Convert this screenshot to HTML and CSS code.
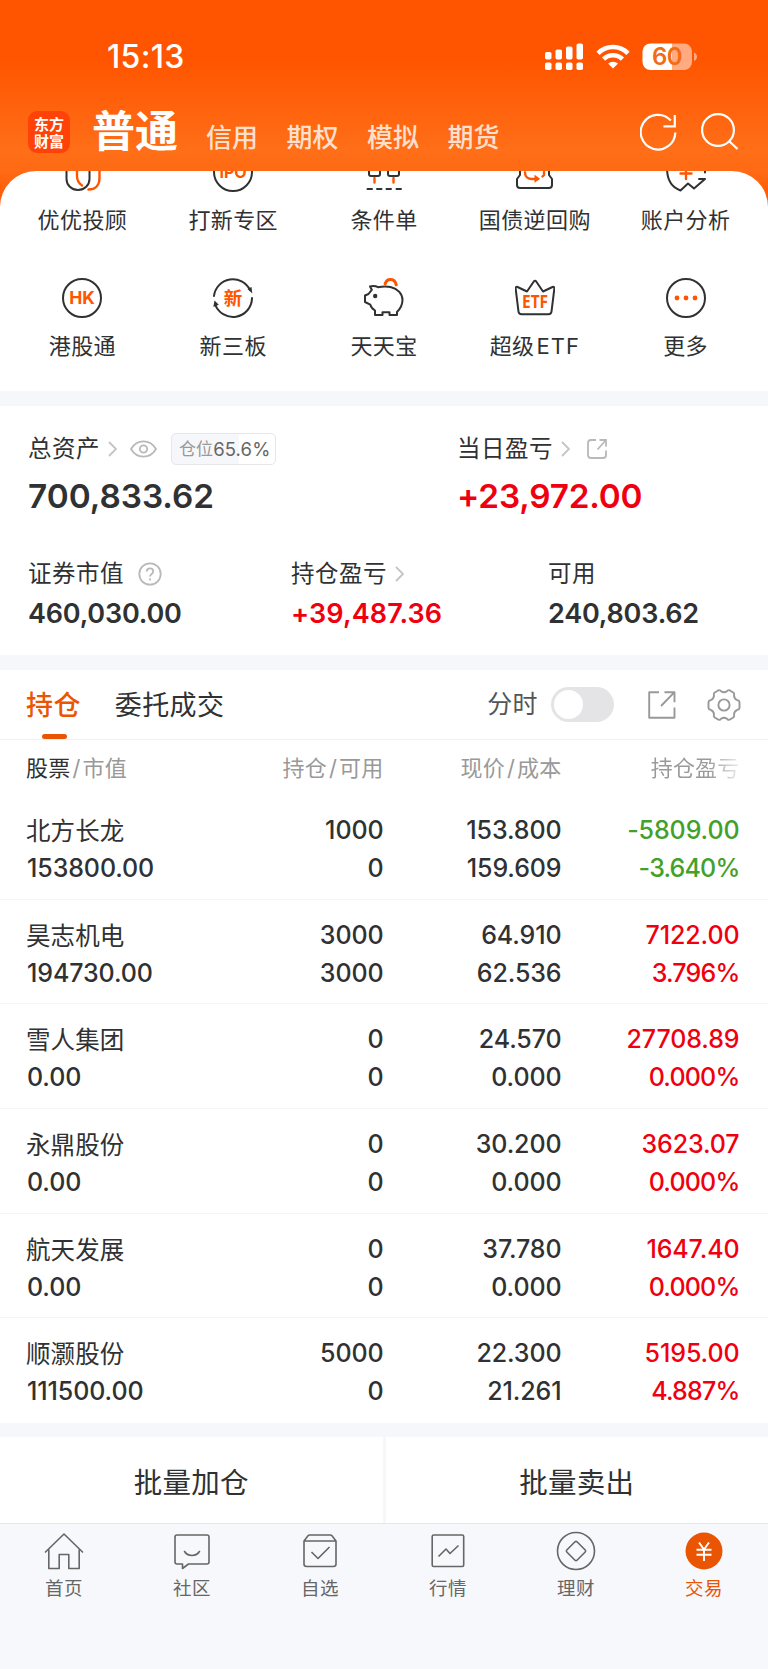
FILE: index.html
```html
<!DOCTYPE html>
<html lang="zh-CN">
<head>
<meta charset="utf-8">
<title>普通交易</title>
<link rel="stylesheet" href="styles.css">
</head>
<body>
<div class="app">
  <header class="top">
    <div class="status">
      <span class="time">15:13</span>
      <svg class="status-icons" width="153" height="28" viewBox="0 0 153 28" fill="#fff">
        <rect x="0" y="9" width="6.5" height="7.5" rx="1.8"/><rect x="10.5" y="6.5" width="6.5" height="10" rx="1.8"/><rect x="21" y="3.5" width="6.5" height="13" rx="1.8"/><rect x="31.5" y="0.5" width="6.5" height="16" rx="1.8"/>
        <rect x="0" y="19.5" width="6.5" height="7.5" rx="1.8"/><rect x="10.5" y="19.5" width="6.5" height="7.5" rx="1.8"/><rect x="21" y="19.5" width="6.5" height="7.5" rx="1.8"/><rect x="31.5" y="19.5" width="6.5" height="7.5" rx="1.8"/>
        <g fill="none" stroke="#fff" stroke-width="4.6"><path d="M53 10.3a21 21 0 0 1 30 0"/><path d="M58.6 16.2a13.2 13.2 0 0 1 18.8 0"/></g>
        <path d="M63 20.6a7.5 7.5 0 0 1 10 0l-5 5z"/>
        <path d="M105.500 .5H127v26.500h-21.500a8 8 0 0 1-8-8v-10.500a8 8 0 0 1 8-8z"/>
        <path d="M127 .5h12a8 8 0 0 1 8 8v10.500a8 8 0 0 1-8 8h-12z" fill-opacity=".5"/>
        <path d="M149 9.500c4 1.500 4 7 0 8.500z" fill-opacity=".5"/>
        <text class="battery" x="122" y="22" text-anchor="middle">60</text>
      </svg>
    </div>
    <div class="nav">
      <div class="logo"><span>东方</span><span>财富</span></div>
      <h1 class="nav-main">普通</h1>
      <nav class="nav-tabs"><span>信用</span><span>期权</span><span>模拟</span><span>期货</span></nav>
      <svg class="nav-icons" width="128" height="40" viewBox="0 0 128 40" fill="none" stroke="#fff" stroke-width="2.200">
        <path d="M35.300 20.500a17.300 17.300 0 1 1-4.500-12M34.800 3v11.300H23.500"/>
        <circle cx="78" cy="18" r="15.900"/><path d="M89.500 29.500l8 7.500"/>
      </svg>
    </div>
  </header>

  <section class="shortcuts">
    <div class="cut">
      <svg width="40" height="40" viewBox="0 0 40 40"><path d="M4.500 12v15c0 6 5 11 11.500 11s11.500-5 11.500-11V12" class="ln"/><path d="M15 12v12c0 4 1.500 7 5 9.500M37.500 12v14c0 7-4 11.500-11 11.500" class="or"/></svg>
      <span>优优投顾</span></div>
    <div class="cut">
      <svg width="40" height="40" viewBox="0 0 40 40"><circle cx="20" cy="20" r="19" class="ln"/><text x="20" y="26" class="ic" text-anchor="middle" font-size="16">IPO</text></svg>
      <span>打新专区</span></div>
    <div class="cut">
      <svg width="40" height="40" viewBox="0 0 40 40"><path d="M5 12v10a2 2 0 0 0 2 2h7a2 2 0 0 0 2-2V12M24 12v10a2 2 0 0 0 2 2h7a2 2 0 0 0 2-2V12M3.500 37h4.500M13 37h4.500M22.500 37h4.500M32.500 37h4.500" class="ln"/><path d="M10.500 26v4.500M29.500 26v4.500" class="or"/></svg>
      <span>条件单</span></div>
    <div class="cut">
      <svg width="40" height="40" viewBox="0 0 40 40"><path d="M5 12v11l-3 4v6a3 3 0 0 0 3 3h29a3 3 0 0 0 3-3v-6l-3-4V12" class="ln"/><path d="M10 20.500c0 4 3 6.500 7 6.500h6M29 20v3l-1.500 1.500" class="or"/><path d="M19.500 22.800l5.500 4-5.500 4z" fill="#ff5400"/></svg>
      <span>国债逆回购</span></div>
    <div class="cut">
      <svg width="40" height="40" viewBox="0 0 40 40"><path d="M1 16c0 12 5 19.500 13.500 22.500l7.500-7 6 5 11-9.500h-6M39 16v4.500" class="ln"/><path d="M20 14v13M14.500 21.500h11" class="or"/></svg>
      <span>账户分析</span></div>
    <div class="cut">
      <svg width="40" height="40" viewBox="0 0 40 40"><circle cx="20" cy="20" r="19" class="ln"/><text x="20" y="26.300" class="ic" text-anchor="middle" font-size="17.500">HK</text></svg>
      <span>港股通</span></div>
    <div class="cut">
      <svg width="40" height="40" viewBox="0 0 40 40"><path d="M1 18a19 19 0 0 1 36-6M39 20a19 19 0 0 1-37 6" class="ln"/><path d="M34.500 11l4-2 .8 6.500zM.3 29l1.200-6.500 4.300 4.200z" fill="#303133"/><text x="20" y="26.500" class="ic cjk" text-anchor="middle" font-size="18.500">新</text></svg>
      <span>新三板</span></div>
    <div class="cut">
      <svg width="40" height="40" viewBox="0 0 40 40"><path d="M6 8.500c3-1 5.500-.8 8 .7 5-1 9-1 12.500-.2 7.500 1.700 12 7 12 13 0 5-2.500 9-5.500 12v3h-7.500v-2.800h-7V37H11v-4.500c-2.500-1.500-4-3-4.700-5.800L1 24v-6.500l3.500-1.500 3.300-4.200z" class="ln"/><circle cx="11.200" cy="18" r="2.200" fill="#303133"/><path d="M21.200 5.800c2-6 9.500-5.500 11 1" class="or thick"/></svg>
      <span>天天宝</span></div>
    <div class="cut">
      <svg width="40" height="40" viewBox="0 0 40 40"><path d="M2.500 9l9.500 4.500 6.800-10c.6-.9 1.800-.9 2.400 0l6.800 10L37.500 9c1-.5 2 .3 1.900 1.200l-2.900 23.500a3 3 0 0 1-3 2.600h-27a3 3 0 0 1-3-2.600L.6 10.200C.5 9.300 1.500 8.500 2.500 9z" class="ln"/><text x="20" y="30" class="ic etf" text-anchor="middle" font-size="17.500" textLength="26" lengthAdjust="spacingAndGlyphs">ETF</text></svg>
      <span>超级<u>ETF</u></span></div>
    <div class="cut">
      <svg width="40" height="40" viewBox="0 0 40 40"><circle cx="20" cy="20" r="19" class="ln"/><g fill="#ff5400"><circle cx="11" cy="20" r="2.400"/><circle cx="20" cy="20" r="2.400"/><circle cx="29" cy="20" r="2.400"/></g></svg>
      <span>更多</span></div>
  </section>

  <section class="assets">
    <div class="asset-row main">
      <div class="asset">
        <div class="lab">总资产<svg class="chev" width="9" height="16" viewBox="0 0 9 16"><path d="M1 1l7 7-7 7"/></svg>
          <svg class="eye" width="27" height="18" viewBox="0 0 27 18"><path d="M1 9C7-1.200 20-1.200 26 9 20 19.200 7 19.200 1 9z"/><circle cx="13.500" cy="9" r="3.700"/></svg>
          <span class="badge"><i>仓位</i>65.6%</span></div>
        <div class="num">700,833.62</div>
      </div>
      <div class="asset">
        <div class="lab">当日盈亏<svg class="chev" width="9" height="16" viewBox="0 0 9 16"><path d="M1 1l7 7-7 7"/></svg>
          <svg class="share" width="20" height="20" viewBox="0 0 20 20"><path d="M9 1H4a3 3 0 0 0-3 3v12a3 3 0 0 0 3 3h12a3 3 0 0 0 3-3v-4.500M12.500 1H19v6.500M19 1l-8.500 9.500"/></svg></div>
        <div class="num up">+23,972.00</div>
      </div>
    </div>
    <div class="asset-row sub">
      <div class="asset">
        <div class="lab">证券市值<svg class="help" width="24" height="24" viewBox="0 0 24 24"><circle cx="12" cy="12" r="10.700"/><path d="M8.800 9.500c0-4.300 6.400-4.300 6.400 0 0 2.500-3.200 2.700-3.200 5M12 16.500v2"/></svg></div>
        <div class="num">460,030.00</div>
      </div>
      <div class="asset">
        <div class="lab">持仓盈亏<svg class="chev" width="9" height="16" viewBox="0 0 9 16"><path d="M1 1l7 7-7 7"/></svg></div>
        <div class="num up wide">+39,487.36</div>
      </div>
      <div class="asset">
        <div class="lab">可用</div>
        <div class="num">240,803.62</div>
      </div>
    </div>
  </section>

  <section class="holdings">
    <div class="tabs">
      <span class="tab on">持仓</span>
      <span class="tab">委托成交</span>
      <span class="split">分时</span>
      <span class="toggle"></span>
      <svg class="t-share" width="28" height="28" viewBox="0 0 28 28"><path d="M11 1.200H1.200v25.600h25.300V16.500M16.500 1.200h10v10M26.500 1.200L13 15"/></svg>
      <svg class="t-gear" width="34" height="34" viewBox="0 0 34 34"><path d="M11.500 2.200Q13.500 2 14 3.200Q17 5.200 20 3.200Q20.500 2 22.500 2.200L26.700 4.800Q27.600 6 27 7.600Q27.200 11 30.400 12.200Q32.500 12.600 32.500 14V20Q32.500 21.400 30.400 21.800Q27.200 23 27 26.400Q27.600 28 26.700 29.200L22.500 31.800Q20.500 32 20 30.800Q17 28.800 14 30.800Q13.500 32 11.500 31.800L7.300 29.200Q6.400 28 7 26.400Q6.800 23 3.600 21.800Q1.500 21.400 1.500 20V14Q1.500 12.600 3.600 12.200Q6.800 11 7 7.600Q6.400 6 7.300 4.800z"/><circle cx="17" cy="17" r="5.600"/></svg>
    </div>
    <div class="row head"><span><b>股票</b><s>/</s>市值</span><span>持仓<s>/</s>可用</span><span>现价<s>/</s>成本</span><span class="fade">持仓盈亏</span></div>
    <div class="row"><div><em>北方长龙</em><span>153800.00</span></div><div><span>1000</span><span>0</span></div><div><span>153.800</span><span>159.609</span></div><div class="down"><span>-5809.00</span><span class="pct">-3.640%</span></div></div>
    <div class="row"><div><em>昊志机电</em><span>194730.00</span></div><div><span>3000</span><span>3000</span></div><div><span>64.910</span><span>62.536</span></div><div class="up"><span>7122.00</span><span class="pct">3.796%</span></div></div>
    <div class="row"><div><em>雪人集团</em><span>0.00</span></div><div><span>0</span><span>0</span></div><div><span>24.570</span><span>0.000</span></div><div class="up"><span>27708.89</span><span class="pct">0.000%</span></div></div>
    <div class="row"><div><em>永鼎股份</em><span>0.00</span></div><div><span>0</span><span>0</span></div><div><span>30.200</span><span>0.000</span></div><div class="up"><span>3623.07</span><span class="pct">0.000%</span></div></div>
    <div class="row"><div><em>航天发展</em><span>0.00</span></div><div><span>0</span><span>0</span></div><div><span>37.780</span><span>0.000</span></div><div class="up"><span>1647.40</span><span class="pct">0.000%</span></div></div>
    <div class="row"><div><em>顺灏股份</em><span>111500.00</span></div><div><span>5000</span><span>0</span></div><div><span>22.300</span><span>21.261</span></div><div class="up"><span>5195.00</span><span class="pct">4.887%</span></div></div>
  </section>

  <div class="batch"><span>批量加仓</span><span>批量卖出</span></div>

  <footer class="bar">
    <div class="item"><svg width="40" height="40" viewBox="0 0 40 40"><path d="M1 21.500L20 3l19 18.500M4.800 18.500V37.500h10.400V23.500h9.600v14h10.400V18.500"/></svg><span>首页</span></div>
    <div class="item"><svg width="40" height="40" viewBox="0 0 40 40"><path d="M5 4h30a2 2 0 0 1 2 2v25a2 2 0 0 1-2 2H16.500l-6 4.500V33H5a2 2 0 0 1-2-2V6a2 2 0 0 1 2-2zM12.200 20c3.500 6 12 6 15.600 0"/></svg><span>社区</span></div>
    <div class="item"><svg width="40" height="40" viewBox="0 0 40 40"><path d="M4 10h32v23a2.500 2.500 0 0 1-2.500 2.500h-27A2.500 2.500 0 0 1 4 33zL8 4.800q.5-.8 1.500-.8h21q1 0 1.500.8L36 10M11.500 21l6.500 6.500L29.500 16"/></svg><span>自选</span></div>
    <div class="item"><svg width="40" height="40" viewBox="0 0 40 40"><rect x="4.200" y="4" width="31.500" height="31.500" rx="1.500"/><path d="M10.500 25.500l7.500-7.500 4 4.500 8.500-8"/></svg><span>行情</span></div>
    <div class="item"><svg width="40" height="40" viewBox="0 0 40 40"><circle cx="20" cy="20" r="18.500"/><path d="M19 10.800q1-.8 2 0l8.200 8.200q1 1 0 2L21 29.200q-1 1-2 0L10.800 21q-1-1 0-2z"/></svg><span>理财</span></div>
    <div class="item on"><svg width="40" height="40" viewBox="0 0 40 40"><circle cx="20" cy="20" r="18.500" class="disc"/><path d="M15 11.500l5 7 5-7M12.500 18.700h15M12.500 23.700h15M20 18.500V30" class="yen"/></svg><span>交易</span></div>
  </footer>
</div>
</body>
</html>
```
FILE: styles.css
```css
* { box-sizing: border-box; }
body { margin: 0; background: #f6f7fa; color: #303133; font-family: Inter, "Noto Sans CJK SC", sans-serif; }
svg { display: block; flex: none; }
span { white-space: nowrap; }
.app { width: 768px; height: 1669px; overflow: hidden; display: flex; flex-direction: column; }

.top { flex: none; height: 209px; margin-bottom: -38px; background: linear-gradient(#ff5500 0, #ff5500 60px, #ff6e18 150px, #ff6a14 171px, #ff5500 209px); color: #fff; }
.status { height: 92px; padding: 22px 70px 0 107px; display: flex; justify-content: space-between; align-items: center; }
.time { font-size: 32px; font-weight: 550; line-height: 40px; letter-spacing: .3px; }
.battery { font-size: 24px; font-weight: 600; fill: #f56a15; letter-spacing: -.5px; }
.nav { height: 79px; padding: 0 0 0 28px; display: flex; align-items: center; }
.logo { width: 42px; height: 42px; border-radius: 9px; background: #ff4208; display: flex; flex-direction: column; justify-content: center; align-items: center; font: 700 15px/17px "Noto Sans CJK SC", sans-serif; }
.nav-main { margin: -2px 0 0 22px; font-size: 43px; font-weight: 700; line-height: 60px; }
.nav-tabs { display: flex; gap: 28.500px; margin: 12px 0 0 28px; font-size: 26px; font-weight: 500; line-height: 36px; color: #ffe0cf; }
.nav-icons { margin-left: auto; }

.shortcuts { position: relative; flex: none; height: 220px; padding: 0 7px; background: #fff; border-radius: 36px 36px 0 0; overflow: hidden; display: grid; grid-template-columns: repeat(5, 1fr); grid-auto-rows: 126px; align-content: start; }
.cut { display: flex; flex-direction: column; align-items: center; margin-top: -19px; margin-bottom: 19px; }
.cut span { margin-top: 13px; font-size: 22px; line-height: 30px; letter-spacing: .4px; }
.cut u { text-decoration: none; margin-left: 2px; letter-spacing: 1px; }
.ln { fill: none; stroke: #303133; stroke-width: 2; stroke-linecap: round; stroke-linejoin: round; }
.or { fill: none; stroke: #ff5400; stroke-width: 2.400; stroke-linecap: round; stroke-linejoin: round; }
.thick { stroke-width: 3; }
.ic { fill: #ff5400; font-weight: 700; font-family: Inter, sans-serif; }
.cjk { font-family: "Noto Sans CJK SC", sans-serif; }
.etf { font-family: "Noto Sans", sans-serif; }

.assets { flex: none; height: 249px; margin-top: 15px; padding: 0 28px; background: #fff; }
.asset-row { display: grid; }
.main { height: 148px; padding-top: 26px; grid-template-columns: 429px 1fr; }
.sub { grid-template-columns: 263px 257px 1fr; }
.lab { display: flex; align-items: center; height: 34px; font-size: 23.500px; letter-spacing: .5px; line-height: 34px; }
.main .num { font-size: 33.300px; font-weight: 600; line-height: 44px; margin-top: 8px; }
.main .num.up { letter-spacing: -.2px; }
.sub .num { font-size: 27px; font-weight: 600; line-height: 36px; margin-top: 5px; letter-spacing: -.2px; }
.sub .num.wide { letter-spacing: .1px; }
.sub .lab { margin-top: 3px; }
.chev, .eye, .share, .help { fill: none; stroke: #b9b9bb; stroke-width: 1.800; }
.chev { margin-left: 8px; stroke: #c4c4c6; }
.eye { margin-left: 13px; }
.share { margin-left: 17px; }
.help { margin-left: 14px; }
.badge { margin-left: 14px; width: 105px; height: 32px; border: 1px solid #e6e7ea; border-radius: 5px; background: linear-gradient(90deg, #f6f7fa 65%, #fff 65%); display: flex; align-items: center; padding-left: 7px; font-size: 18.500px; color: #666; letter-spacing: .1px; }
.badge i { font-style: normal; font-size: 17px; color: #999; }
.up { color: #f0000f; }
.down { color: #43a02a; }

.holdings { flex: none; height: 753px; margin-top: 15px; background: #fff; }
.tabs { position: relative; height: 70px; border-bottom: 1px solid #f0f1f3; padding: 0 27px 0 26px; display: flex; align-items: center; font-size: 27px; letter-spacing: .4px; }
.tab { line-height: 71px; height: 69px; }
.tab + .tab { margin-left: 34px; }
.on { color: #ea5504; }
.tab.on { position: relative; font-weight: 500; }
.tab.on::after { content: ""; position: absolute; left: 16px; bottom: 0; width: 25px; height: 5px; border-radius: 2.500px; background: #ea5504; }
.split { margin-left: auto; font-size: 25px; line-height: 34px; margin-top: -2px; color: #555; }
.toggle { width: 63px; height: 35px; margin-left: 13px; border-radius: 18px; background: #e4e4e6; padding: 3px; }
.toggle::before { content: ""; display: block; width: 29px; height: 29px; border-radius: 50%; background: #fff; }
.t-share, .t-gear { fill: none; stroke: #999; stroke-width: 1.900; stroke-linejoin: round; }
.t-share { margin-left: 34px; }
.t-gear { margin-left: 31px; }
.row { display: grid; grid-template-columns: 200px 156.500px 178px 178px; padding: 16px 29px 0 27px; height: 104.700px; border-bottom: 1px solid #f5f5f6; font-size: 25px; font-weight: 550; line-height: 38px; letter-spacing: -.1px; }
.row > div { display: flex; flex-direction: column; align-items: flex-end; }
.row > div:first-child { align-items: flex-start; }
.row em { font-style: normal; font-weight: 400; font-size: 24.500px; letter-spacing: .1px; margin-left: -1px; position: relative; top: 1px; }
.row .pct { letter-spacing: -.8px; }
.row:last-child { border: 0; }
.head { height: 55px; padding-top: 9px; border: 0; font-size: 22px; font-weight: 400; color: #999; letter-spacing: .2px; }
.head > span { text-align: right; }
.head > span:first-child { text-align: left; margin-left: -1px; }
.head b { color: #303133; font-weight: 400; }
.head s { text-decoration: none; margin: 0 2px; }
.head .fade { color: transparent; background: linear-gradient(90deg, #999 82%, #eee 100%); -webkit-background-clip: text; background-clip: text; }

.batch { flex: none; height: 86px; margin-top: 14px; display: flex; gap: 3px; font-size: 28.500px; letter-spacing: .3px; }
.batch span { flex: 1; background: #fff; display: flex; align-items: center; justify-content: center; padding-top: 1px; }
.bar { flex: 1; display: grid; grid-template-columns: repeat(6, 1fr); border-top: 1px solid #e6e7ea; background: #f7f8fb; padding-top: 7px; }
.item { display: flex; flex-direction: column; align-items: center; color: #666; font-size: 18.500px; line-height: 28px; letter-spacing: .4px; }
.item span { margin-top: 3px; }
.item svg { fill: none; stroke: #666; stroke-width: 1.600; stroke-linejoin: round; }
.item.on { color: #ea5504; }
.item .disc { fill: #ea5504; stroke: none; }
.item .yen { stroke: #fff; stroke-width: 1.900; }
```
